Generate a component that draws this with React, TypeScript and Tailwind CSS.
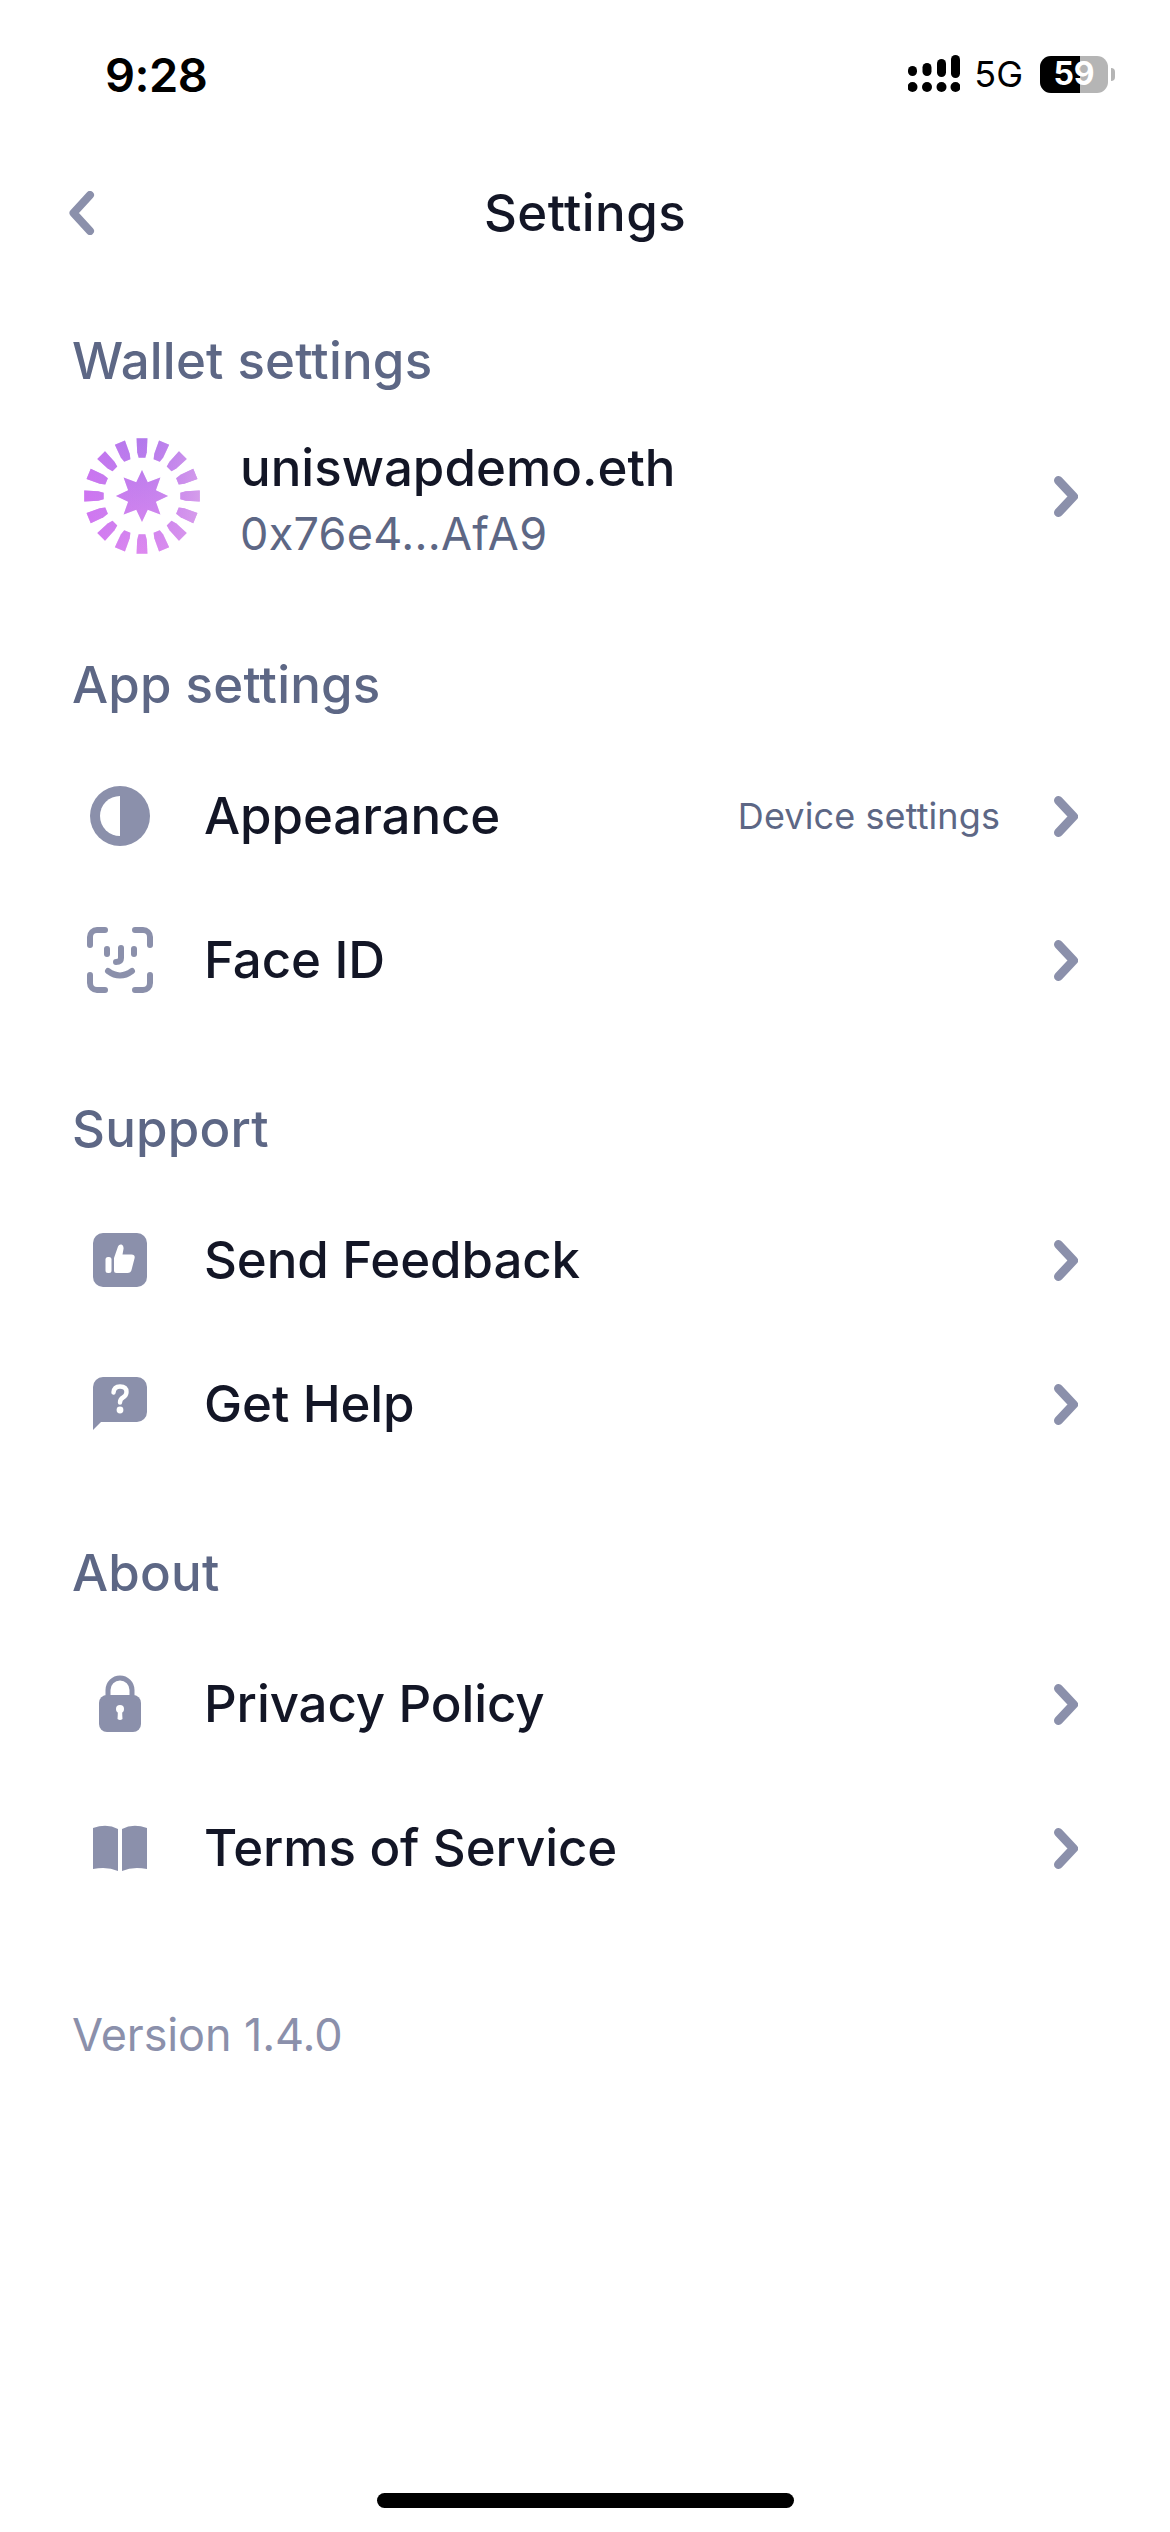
const chevronRight = (
  <svg width="24" height="41" viewBox="0 0 24 41" fill="none" className="shrink-0">
    <path d="M4.5 4.5 L19.5 20.5 L4.5 36.5" stroke="#8B90AB" strokeWidth="9" strokeLinecap="round" strokeLinejoin="round" />
  </svg>
);

function polar(r: number, deg: number): string {
  const a = (deg * Math.PI) / 180;
  return `${(60 + r * Math.sin(a)).toFixed(2)},${(60 - r * Math.cos(a)).toFixed(2)}`;
}

const avatarShapes: string[] = [];
for (let i = 0; i < 16; i++) {
  const d = i * 22.5;
  avatarShapes.push(
    [polar(38.5, d - 5), polar(38.5, d + 5), polar(44, d + 6.3), polar(58, d + 5.4), polar(58, d - 5.4), polar(44, d - 6.3)].join(" ")
  );
}
const starPoints: string[] = [];
for (let i = 0; i < 16; i++) {
  starPoints.push(polar(i % 2 === 0 ? 26 : 15, i * 22.5));
}
avatarShapes.push(starPoints.join(" "));

function Avatar() {
  return (
    <svg width="120" height="120" viewBox="0 0 120 120" className="shrink-0">
      <defs>
        <linearGradient id="av" gradientUnits="userSpaceOnUse" x1="60" y1="2" x2="60" y2="118">
          <stop offset="0" stopColor="#AD78EB" />
          <stop offset="1" stopColor="#E48BF0" />
        </linearGradient>
        <linearGradient id="avh" gradientUnits="userSpaceOnUse" x1="2" y1="60" x2="118" y2="60">
          <stop offset="0" stopColor="#D070F2" stopOpacity="0.75" />
          <stop offset="0.5" stopColor="#C47EEE" stopOpacity="0.2" />
          <stop offset="1" stopColor="#D8A4EA" stopOpacity="0.8" />
        </linearGradient>
      </defs>
      {avatarShapes.map((p, i) => (
        <g key={i}>
          <polygon points={p} fill="url(#av)" />
          <polygon points={p} fill="url(#avh)" />
        </g>
      ))}
    </svg>
  );
}

const C = "#8B90AB";

const AppearanceIcon = (
  <svg width="60" height="60" viewBox="0 0 60 60">
    <circle cx="30" cy="30" r="30" fill={C} />
    <path d="M30 10 A20 20 0 0 0 30 50 Z" fill="#fff" />
  </svg>
);

const FaceIcon = (
  <svg width="66" height="66" viewBox="0 0 66 66" fill="none" stroke={C} strokeWidth="6" strokeLinecap="round" strokeLinejoin="round">
    <path d="M3 18 V10 A7 7 0 0 1 10 3 H18" />
    <path d="M48 3 H56 A7 7 0 0 1 63 10 V18" />
    <path d="M3 48 V56 A7 7 0 0 0 10 63 H18" />
    <path d="M48 63 H56 A7 7 0 0 0 63 56 V48" />
    <path d="M20 22 V27" />
    <path d="M47 22 V27" />
    <path d="M34 21 V31 Q34 35 29 35" />
    <path d="M21 44 Q33 53 45 44" />
  </svg>
);

const ThumbIcon = (
  <svg width="54" height="54" viewBox="0 0 54 54">
    <rect width="54" height="54" rx="10" fill={C} />
    <rect x="12.5" y="24" width="6" height="16" rx="2.5" fill="#fff" />
    <path d="M21 25 L25 13.5 Q26 11 28.5 11.5 Q31 12.5 30.5 16 L29.5 21.5 H38.5 Q42.5 21.5 41.5 25.5 L38.5 37 Q37.8 40 34.5 40 H23.5 Q21 40 21 37.5 Z" fill="#fff" />
  </svg>
);

const HelpIcon = (
  <svg width="54" height="54" viewBox="0 0 54 54">
    <path d="M10 0 H44 A10 10 0 0 1 54 10 V35 A10 10 0 0 1 44 45 H8 L0 53 V10 A10 10 0 0 1 10 0 Z" fill={C} />
    <path d="M20.5 15.5 Q21 9.5 27 9.5 Q33.5 9.5 33.5 15 Q33.5 18.5 30 20.5 Q27 22.3 27 25.5" fill="none" stroke="#fff" strokeWidth="4.4" strokeLinecap="round" />
    <circle cx="27" cy="33" r="3.4" fill="#fff" />
  </svg>
);

const LockIcon = (
  <svg width="42" height="58" viewBox="0 0 42 58">
    <path d="M9 22 V15 A12 12 0 0 1 33 15 V22" fill="none" stroke={C} strokeWidth="5" />
    <rect y="20" width="42" height="37" rx="8" fill={C} />
    <circle cx="21" cy="34" r="4" fill="#fff" />
    <path d="M19 35 H23 L23.5 44 Q21 46 18.5 44 Z" fill="#fff" />
  </svg>
);

const BookIcon = (
  <svg width="54" height="46" viewBox="0 0 54 46">
    <path d="M0 3 Q14 -2 25 4 V46 Q14 41 0 44 Z" fill={C} />
    <path d="M54 3 Q40 -2 29 4 V46 Q40 41 54 44 Z" fill={C} />
  </svg>
);

function SectionTitle({ children }: { children: string }) {
  return <div className="pl-[72px] pt-[3px] h-[72px] flex items-center text-[51px] font-[450] tracking-[0.2px] text-[#5D6785]">{children}</div>;
}

function Row({ icon, label, value }: { icon: React.ReactNode; label: string; value?: string }) {
  return (
    <div className="h-[144px] flex items-center pl-[72px] pr-[92px]">
      <div className="w-[96px] mr-[36px] flex items-center justify-center shrink-0">{icon}</div>
      <div className="flex-1 text-[51px] font-medium tracking-[-0.1px] text-[#131626]">{label}</div>
      {value && <div className="mr-[54px] text-[36px] tracking-[0.1px] text-[#5D6785]">{value}</div>}
      {chevronRight}
    </div>
  );
}

export default function App() {
  return (
    <div className="w-[1170px] h-[2532px] bg-white flex flex-col font-['Inter',sans-serif]">
      <div className="h-[148px] pl-[105px] pr-[55px] flex items-center justify-between text-black">
        <div className="text-[47px] font-semibold leading-none tracking-[-0.5px]">9:28</div>
        <div className="flex items-center">
          <svg width="52" height="38" viewBox="0 0 52 38" fill="#000" className="mr-[14px]">
            <rect x="0" y="11" width="9" height="10" rx="4.5" />
            <rect x="14.5" y="8" width="9" height="13" rx="4.5" />
            <rect x="29" y="4" width="9" height="18" rx="4.5" />
            <rect x="43" y="0" width="9" height="23" rx="4.5" />
            <circle cx="4.5" cy="32" r="5" />
            <circle cx="19" cy="32" r="5" />
            <circle cx="33.5" cy="32" r="5" />
            <circle cx="47.5" cy="32" r="5" />
          </svg>
          <div className="text-[36px] leading-none font-normal mr-[17px]">5G</div>
          <div className="relative w-[68px] h-[37px] rounded-[11px] overflow-hidden bg-[#B5B5B5] flex">
            <div className="w-[40px] bg-black" />
            <div className="absolute inset-0 flex items-center justify-center text-[32px] leading-none font-bold text-white">59</div>
          </div>
          <div className="ml-[3px] w-[4px] h-[13px] rounded-r-full bg-[#B5B5B5]" />
        </div>
      </div>

      <div className="relative h-[130px] flex items-center justify-center">
        <svg width="30" height="44" viewBox="0 0 30 44" fill="none" className="absolute left-[66px] top-[43px]">
          <path d="M24 4 L7.5 22 L24 40" stroke={C} strokeWidth="8" strokeLinecap="round" strokeLinejoin="round" />
        </svg>
        <div className="text-[51px] font-medium tracking-[0.4px] text-[#131626] mt-[1px]">Settings</div>
      </div>

      <div className="h-[46px]" />
      <SectionTitle>Wallet settings</SectionTitle>
      <div className="h-[192px] flex items-center pl-[82px] pr-[92px] pt-[8px]">
        <div className="mr-[38px] flex"><Avatar /></div>
        <div className="flex-1 flex flex-col pt-[9px]">
          <div className="text-[51px] font-medium text-[#131626] leading-[66px]">uniswapdemo.eth</div>
          <div className="text-[45px] tracking-[0.3px] text-[#5D6785] leading-[66px]">0x76e4...AfA9</div>
        </div>
        {chevronRight}
      </div>

      <div className="h-[60px]" />
      <SectionTitle>App settings</SectionTitle>
      <div className="h-[24px]" />
      <Row icon={AppearanceIcon} label="Appearance" value="Device settings" />
      <Row icon={FaceIcon} label="Face ID" />

      <div className="h-[60px]" />
      <SectionTitle>Support</SectionTitle>
      <div className="h-[24px]" />
      <Row icon={ThumbIcon} label="Send Feedback" />
      <Row icon={HelpIcon} label="Get Help" />

      <div className="h-[60px]" />
      <SectionTitle>About</SectionTitle>
      <div className="h-[24px]" />
      <Row icon={LockIcon} label="Privacy Policy" />
      <Row icon={BookIcon} label="Terms of Service" />

      <div className="pl-[72px] mt-[79px] text-[45px] tracking-[-0.1px] leading-[72px] text-[#8B90AB]">Version 1.4.0</div>

      <div className="mt-auto mb-[24px] mx-auto w-[417px] h-[15px] rounded-full bg-black" />
    </div>
  );
}
